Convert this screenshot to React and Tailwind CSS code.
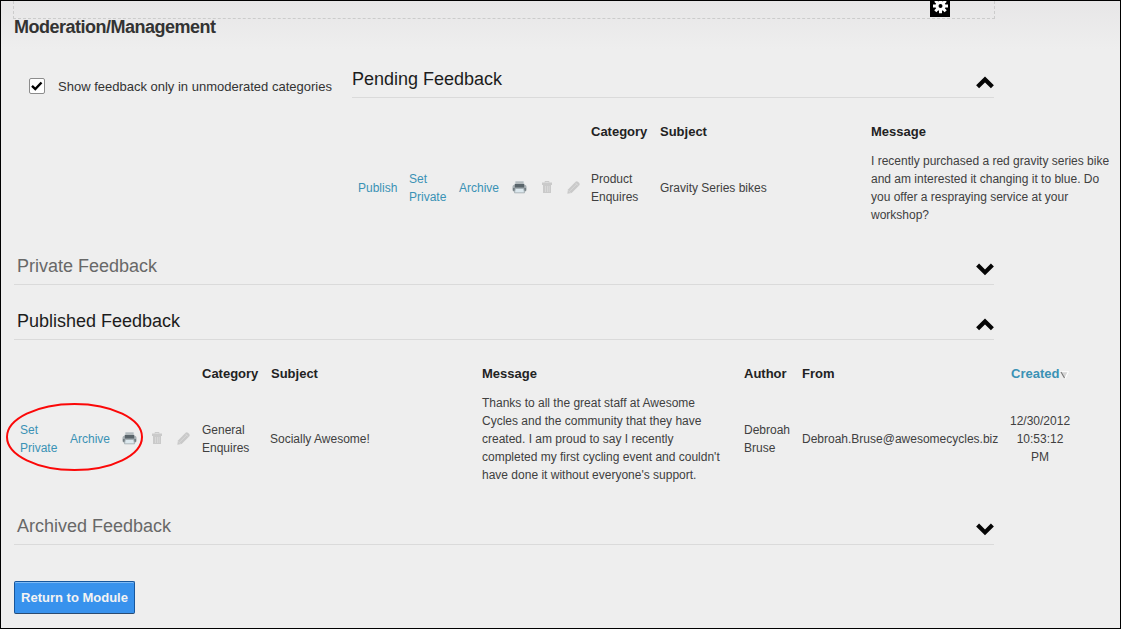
import React from "react";

function Chevron({ up }) {
  return (
    <svg width="18" height="13" viewBox="0 0 18 13" className="mt-[7px] shrink-0">
      <path d={up ? "M1.6 10.8 L9 3.4 L16.4 10.8" : "M1.6 2 L9 9.4 L16.4 2"} fill="none" stroke="#050505" strokeWidth="4.2" />
    </svg>
  );
}

function SectionHeading({ title, open, inset = "pl-[3px]" }) {
  return (
    <div className={`flex h-[38px] items-center justify-between border-b border-[#dadada] ${inset}`}>
      <h2 className={`text-[18px] leading-[20px] ${open ? "text-[#1c1c1c]" : "text-[#686868]"}`}>{title}</h2>
      <Chevron up={open} />
    </div>
  );
}

function Printer() {
  return (
    <svg width="15" height="14" viewBox="0 0 16 14">
      <path d="M3.5 0.5h9l1 5h-11z" fill="#d3d9dc" />
      <path d="M4 1h8l.5 3.5h-9z" fill="#b3babd" />
      <rect x="0.5" y="4.5" width="15" height="7.5" rx="2.2" fill="#aab2b6" />
      <rect x="3" y="3.8" width="10" height="3.8" fill="#59646a" />
      <rect x="1" y="8" width="2" height="3" fill="#727c81" />
      <rect x="13" y="8" width="2" height="3" fill="#727c81" />
      <path d="M3.5 8.5h9l.8 4.7H2.7z" fill="#dce8ee" stroke="#98a3a8" strokeWidth="0.8" />
    </svg>
  );
}

function Trash() {
  return (
    <svg width="10" height="12" viewBox="0 0 10 12">
      <path d="M3 1.5V.5h4v1" fill="none" stroke="#cacaca" />
      <path d="M0 1.5h10V4H0zM1 4h8v8H1z" fill="#cacaca" />
      <path d="M3.5 5v6M5.5 5v6M7.2 5v6" stroke="#dedede" strokeWidth="0.7" />
    </svg>
  );
}

function Pencil() {
  return (
    <svg width="13" height="13" viewBox="0 0 13 13">
      <path d="M0.3 12.7L1 8.4 8.6.8Q9.8-.2 11 .8l1.2 1.2q1 1.2 0 2.4L4.6 12z" fill="#c9c9c9" />
      <path d="M3 9.8L9.6 3.2M8.3 1.7l3 3M1 9.3l2.6 2.6" stroke="#e2e2e2" strokeWidth="0.6" />
    </svg>
  );
}

function Tools() {
  return (
    <div className="mb-[2px] flex h-[14px] items-center">
      <Printer />
      <span className="ml-[15px]"><Trash /></span>
      <span className="ml-[15px]"><Pencil /></span>
    </div>
  );
}

function Gear() {
  return (
    <svg width="20" height="16" viewBox="0 0 20 16" className="block bg-black">
      <g stroke="#fff" strokeWidth="3">
        <path d="M10.5 -2v14.2M3 5h15M5.3 -.2l10.4 10.4M15.7 -.2l-10.4 10.4" />
      </g>
      <circle cx="10.5" cy="5" r="5" fill="#fff" />
      <circle cx="10.5" cy="5" r="2" fill="#000" />
    </svg>
  );
}

const link = "text-[#3a92b5]";

export default function App() {
  return (
    <div className="relative h-[629px] w-[1121px] overflow-hidden border border-black bg-[linear-gradient(to_bottom,#e7e6e7_0px,#eeeeee_48px)] pl-[13px] font-['Liberation_Sans',Arial,sans-serif] text-[12px] leading-[18px] text-[#404040]">
      <div className="-ml-px flex h-[18px] w-[982px] justify-end border border-t-0 border-dashed border-[#cccccc] pr-[44px]">
        <Gear />
      </div>
      <h1 className="h-[16px] text-[18px] leading-[16px] font-bold tracking-[-0.5px] text-[#333]">Moderation/Management</h1>

      <div className="flex h-[63px] w-[980px] items-end">
        <label className="mb-[2px] flex w-[338px] items-center pl-[15px] text-[13px] text-[#333]">
          <span className="mb-[2px] flex size-4 items-center justify-center rounded-[2px] border border-[#8c8c8c] bg-white">
            <svg width="12" height="10" viewBox="0 0 12 10"><path d="M1 4.8L4.3 8 10.5 1.5" fill="none" stroke="#000" strokeWidth="2.4" /></svg>
          </span>
          <span className="ml-[13px] whitespace-nowrap">Show feedback only in unmoderated categories</span>
        </label>
        <div className="flex-1"><SectionHeading title="Pending Feedback" open inset="pl-0" /></div>
      </div>

      <div className="ml-[344px] grid w-[762px] grid-cols-[51px_50px_53px_79px_69px_211px_249px] items-center pt-[25px]">
        <div className="col-span-4" />
        <b className="text-[13px] text-[#222]">Category</b>
        <b className="text-[13px] text-[#222]">Subject</b>
        <b className="text-[13px] text-[#222]">Message</b>
        <div className="col-span-7 h-[11px]" />
        <span className={link}>Publish</span>
        <span className={link}>Set<br />Private</span>
        <span className={link}>Archive</span>
        <Tools />
        <span>Product<br />Enquires</span>
        <span>Gravity Series bikes</span>
        <span className="whitespace-nowrap">I recently purchased a red gravity series bike<br />and am interested it changing it to blue. Do<br />you offer a respraying service at your<br />workshop?</span>
      </div>

      <div className="mt-[23px] w-[980px]"><SectionHeading title="Private Feedback" /></div>
      <div className="mt-[17px] w-[980px]"><SectionHeading title="Published Feedback" open /></div>

      <div className="ml-[6px] grid w-[1070px] grid-cols-[50px_52px_80px_68px_212px_262px_58px_208px_80px] items-center pt-[25px]">
        <div className="col-span-3" />
        <b className="text-[13px] text-[#222]">Category</b>
        <b className="pl-px text-[13px] text-[#222]">Subject</b>
        <b className="text-[13px] text-[#222]">Message</b>
        <b className="text-[13px] text-[#222]">Author</b>
        <b className="text-[13px] text-[#222]">From</b>
        <b className="flex items-center pl-px text-[13px] text-[#3a92b5]">Created
          <svg width="9" height="8" viewBox="0 0 9 8" className="mt-px ml-px"><path d="M1 .5h7.5L5 7.5z" fill="#d5d5d5" /><path d="M8.5 .5L5 7.5" stroke="#fff" strokeWidth="1.2" /><path d="M.5 .7h8" stroke="#fff" /><path d="M1 1l3.5 6" stroke="#777" strokeWidth="1.1" /></svg>
        </b>
        <div className="col-span-9 h-[11px]" />
        <span className={link}>Set<br />Private</span>
        <span className={link}>Archive</span>
        <Tools />
        <span>General<br />Enquires</span>
        <span>Socially Awesome!</span>
        <span className="whitespace-nowrap">Thanks to all the great staff at Awesome<br />Cycles and the community that they have<br />created. I am proud to say I recently<br />completed my first cycling event and couldn't<br />have done it without everyone's support.</span>
        <span>Debroah<br />Bruse</span>
        <span>Debroah.Bruse@awesomecycles.biz</span>
        <span className="w-[60px] text-center">12/30/2012<br />10:53:12<br />PM</span>
      </div>

      <div className="mt-[23px] w-[980px]"><SectionHeading title="Archived Feedback" /></div>

      <button className="mt-[36px] block h-[33px] w-[121px] rounded-[2px] border border-[#17569c] border-b-[#2b4b70] bg-[#3892ed] text-[13px] font-bold whitespace-nowrap text-[#f3f3f3] shadow-[inset_0_1px_0_#80bbf5]">Return to Module</button>

      <svg width="138" height="70" viewBox="0 0 138 70" className="absolute top-[401px] left-[5px]">
        <ellipse cx="68.5" cy="35" rx="67.5" ry="33" fill="none" stroke="#fb0808" strokeWidth="2" />
      </svg>
    </div>
  );
}
